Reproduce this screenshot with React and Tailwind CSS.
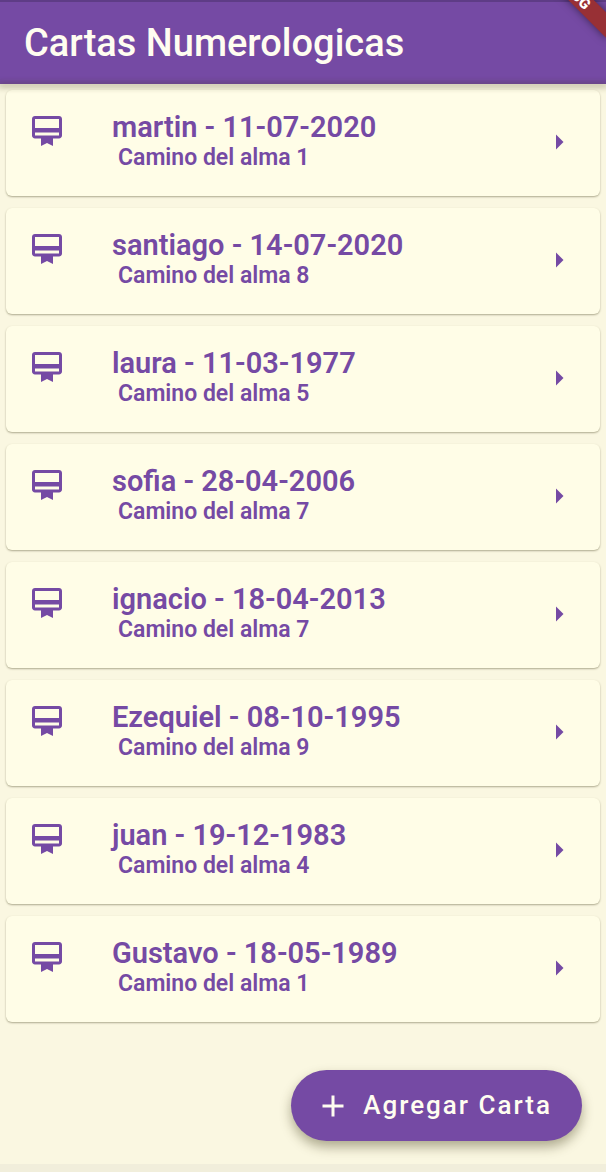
import React from "react";

const cartas = [
  { nombre: "martin", fecha: "11-07-2020", camino: 1 },
  { nombre: "santiago", fecha: "14-07-2020", camino: 8 },
  { nombre: "laura", fecha: "11-03-1977", camino: 5 },
  { nombre: "sofia", fecha: "28-04-2006", camino: 7 },
  { nombre: "ignacio", fecha: "18-04-2013", camino: 7 },
  { nombre: "Ezequiel", fecha: "08-10-1995", camino: 9 },
  { nombre: "juan", fecha: "19-12-1983", camino: 4 },
  { nombre: "Gustavo", fecha: "18-05-1989", camino: 1 },
];

function MembershipIcon() {
  return (
    <svg viewBox="0 0 24 24" className="size-9 shrink-0" fill="currentColor" aria-hidden="true">
      <path d="M20 2H4c-1.11 0-2 .89-2 2v11c0 1.11.89 2 2 2h4v5l4-2 4 2v-5h4c1.11 0 2-.89 2-2V4c0-1.11-.89-2-2-2zm0 13H4v-2h16v2zm0-5H4V4h16v6z" />
    </svg>
  );
}

function ArrowRightIcon() {
  return (
    <svg viewBox="0 0 24 24" className="size-9 shrink-0" fill="currentColor" aria-hidden="true">
      <path d="M10 17l5-5-5-5v10z" />
    </svg>
  );
}

function PlusIcon() {
  return (
    <svg viewBox="0 0 24 24" className="size-9 shrink-0" fill="currentColor" aria-hidden="true">
      <path d="M19 13h-6v6h-2v-6H5v-2h6V5h2v6h6v2z" />
    </svg>
  );
}

function Carta({ nombre, fecha, camino }) {
  return (
    <li>
      <button
        type="button"
        className="flex w-full items-center rounded-md bg-[#fffde7] pt-[23px] pr-[23px] pb-[25px] pl-[23px] text-left text-[#754aa4] shadow-[0_1px_2px_rgba(60,55,20,0.4)]"
      >
        <span className="self-start">
          <MembershipIcon />
        </span>
        <span className="ml-[47px] flex h-[58px] min-w-0 flex-1 flex-col">
          <span className="text-[29px] leading-7 font-semibold">
            {nombre} - {fecha}
          </span>
          <span className="pl-1.5 text-[23px] leading-[34px] font-semibold">Camino del alma {camino}</span>
        </span>
        <ArrowRightIcon />
      </button>
    </li>
  );
}

export default function App() {
  return (
    <div className="flex min-h-screen flex-col border-b-8 border-[#f1eedb] bg-[#faf7e1] font-[Roboto,sans-serif]">
      <header className="relative z-10 flex h-[84px] items-center overflow-hidden bg-[#754aa4] px-6 pt-0.5 shadow-[inset_0_2px_0_#5e3c86]">
        <h1 className="text-[38px] leading-10 font-medium text-[#fffdf0]">Cartas Numerologicas</h1>
        <span className="absolute -top-[19px] -right-6 flex h-[18px] w-[118px] rotate-45 items-center justify-center bg-[#983035] text-[15px] leading-none font-black text-white shadow-[0_0_8px_rgba(0,0,0,0.5)]">
          DEBUG
        </span>
      </header>
      <div className="z-10 h-0 shadow-[0_1px_6px_2px_rgba(60,55,20,0.4)]" />
      <main className="flex flex-1 flex-col">
        <ul className="flex flex-col gap-3 px-1.5 pt-1.5">
          {cartas.map((carta) => (
            <Carta key={carta.nombre} {...carta} />
          ))}
        </ul>
        <div className="mt-auto flex justify-end pr-6 pb-[23px]">
          <button
            type="button"
            className="flex h-[71px] items-center gap-3 rounded-full bg-[#754aa4] pr-[30px] pl-6 text-[26px] font-medium tracking-[2px] text-[#fffdf0] shadow-[0_6px_12px_rgba(60,55,20,0.4)]"
          >
            <PlusIcon />
            Agregar Carta
          </button>
        </div>
      </main>
    </div>
  );
}
